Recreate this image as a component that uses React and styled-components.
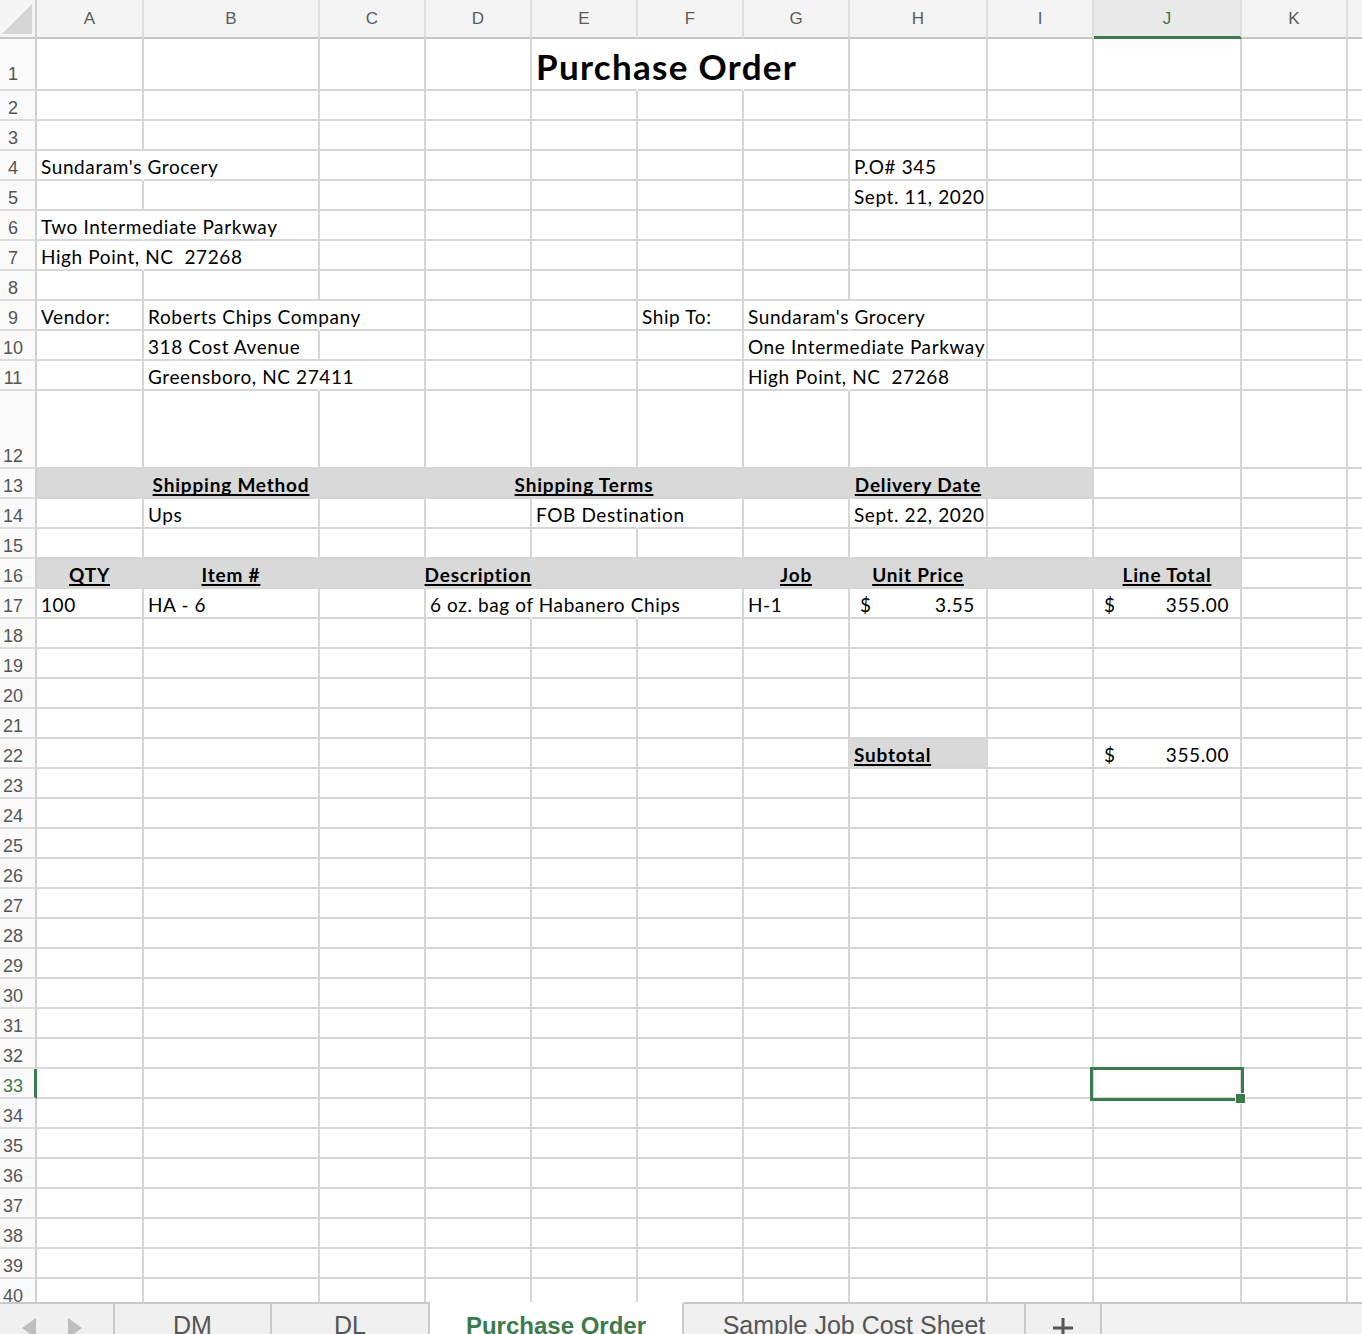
import React from "react";
import styled, { createGlobalStyle } from "styled-components";

const GREEN = "#3b7a4c";
const GRID = "#d6d6d6";
const FILL = "#d9d9d9";

const COLUMNS = ["A", "B", "C", "D", "E", "F", "G", "H", "I", "J", "K", "L"];
const WIDTHS = [107, 176, 106, 106, 106, 106, 106, 138, 106, 148, 106, 106];
const TEMPLATE = `37px ${WIDTHS.map(w => `${w}px`).join(" ")}`;
const HEIGHTS = { 1: 52, 12: 78 };
const ROW_COUNT = 40;

// what each row holds; "overflow" lists cells whose right gridline is hidden by text spilling over
const SHEET = {
  1: { cells: { E: { text: "Purchase Order", kind: "title" } }, overflow: ["E", "F"] },
  4: { cells: { A: { text: "Sundaram's Grocery" }, H: { text: "P.O# 345" } }, overflow: ["A"] },
  5: { cells: { H: { text: "Sept. 11, 2020" } } },
  6: { cells: { A: { text: "Two Intermediate Parkway" } }, overflow: ["A"] },
  7: { cells: { A: { text: "High Point, NC  27268" } }, overflow: ["A"] },
  9: {
    cells: {
      A: { text: "Vendor:" },
      B: { text: "Roberts Chips Company" },
      F: { text: "Ship To:" },
      G: { text: "Sundaram's Grocery" },
    },
    overflow: ["B", "G"],
  },
  10: {
    cells: { B: { text: "318 Cost Avenue" }, G: { text: "One Intermediate Parkway" } },
    overflow: ["G"],
  },
  11: {
    cells: { B: { text: "Greensboro, NC 27411" }, G: { text: "High Point, NC  27268" } },
    overflow: ["B", "G"],
  },
  13: {
    fill: ["A", "I"],
    cells: {
      B: { text: "Shipping Method", kind: "head" },
      E: { text: "Shipping Terms", kind: "head" },
      H: { text: "Delivery Date", kind: "head" },
    },
  },
  14: {
    cells: { B: { text: "Ups" }, E: { text: "FOB Destination" }, H: { text: "Sept. 22, 2020" } },
    overflow: ["E"],
  },
  16: {
    fill: ["A", "J"],
    cells: {
      A: { text: "QTY", kind: "head" },
      B: { text: "Item #", kind: "head" },
      D: { text: "Description", kind: "head" },
      G: { text: "Job", kind: "head" },
      H: { text: "Unit Price", kind: "head" },
      J: { text: "Line Total", kind: "head" },
    },
  },
  17: {
    cells: {
      A: { text: "100" },
      B: { text: "HA - 6" },
      D: { text: "6 oz. bag of Habanero Chips" },
      G: { text: "H-1" },
      H: { text: "3.55", kind: "money" },
      J: { text: "355.00", kind: "money" },
    },
    overflow: ["D", "E"],
  },
  22: {
    fill: ["H", "H"],
    cells: {
      H: { text: "Subtotal", kind: "label" },
      J: { text: "355.00", kind: "money" },
    },
  },
};

const SELECTED = { row: 33, col: "J" };

const TABS = [
  { name: "DM", width: 157 },
  { name: "DL", width: 158 },
  { name: "Purchase Order", width: 254, active: true },
  { name: "Sample Job Cost Sheet", width: 342 },
];

const GlobalStyle = createGlobalStyle`
  html, body {
    margin: 0;
    padding: 0;
    background: #fff;
    overflow: hidden;
  }
  #root {
    width: 1362px;
    height: 1334px;
  }
`;

const Window = styled.div`
  width: 1362px;
  height: 1334px;
  display: flex;
  flex-direction: column;
  overflow: hidden;
  background: #fff;
`;

const Sheet = styled.div`
  flex: 1;
  overflow: hidden;
  display: flex;
  flex-direction: column;
`;

const Row = styled.div`
  display: grid;
  grid-template-columns: ${TEMPLATE};
  height: ${p => p.$height}px;
  flex-shrink: 0;
`;

const Corner = styled.div`
  box-sizing: border-box;
  background: #f4f4f4;
  border-right: 2px solid #d0d0d0;
  border-bottom: 2px solid #c6c6c6;
  display: flex;
  align-items: flex-end;
  justify-content: flex-end;
  padding: 0 3px 3px 0;
`;

const ColHead = styled.div`
  box-sizing: border-box;
  background: ${p => (p.$active ? "#e9e9e9" : "#f4f4f4")};
  border-right: 2px solid #dedede;
  border-bottom: ${p => (p.$active ? `3px solid ${GREEN}` : "2px solid #c6c6c6")};
  display: flex;
  align-items: center;
  justify-content: center;
  padding-top: ${p => (p.$active ? 1 : 0)}px;
  font-family: "Liberation Sans", Arial, sans-serif;
  font-size: 17px;
  color: ${p => (p.$active ? GREEN : "#5b5b5b")};
`;

const RowHead = styled.div`
  box-sizing: border-box;
  background: #fafafa;
  border-right: ${p => (p.$active ? `3px solid ${GREEN}` : "2px solid #d0d0d0")};
  border-bottom: 2px solid #dcdcdc;
  display: flex;
  align-items: flex-end;
  justify-content: center;
  padding: 0 ${p => (p.$active ? 8 : 9)}px ${p => (p.$tall ? 4 : 0)}px 0;
  font-family: "Liberation Sans", Arial, sans-serif;
  font-size: 18px;
  color: ${p => (p.$active ? GREEN : "#555")};
`;

const borderColor = p => {
  if (p.$fill) return p.$fillEnd ? GRID : FILL;
  if (p.$overflow) return "transparent";
  return GRID;
};

const Cell = styled.div`
  box-sizing: border-box;
  position: ${p => (p.$selected ? "relative" : "static")};
  min-width: 0;
  display: flex;
  align-items: flex-end;
  justify-content: ${p => (p.$center ? "center" : "flex-start")};
  padding: 0 4px ${p => (p.$title ? 2 : 0)}px 4px;
  background: ${p => (p.$fill ? FILL : "transparent")};
  border-right: 2px solid ${borderColor};
  border-bottom: 2px solid ${GRID};
  white-space: pre;
  font-family: Lato, "Noto Sans", sans-serif;
  font-size: 19px;
  letter-spacing: 0.6px;
  color: #000;
`;

const Value = styled.span`
  position: relative;
  line-height: 1.2;
`;

const Title = styled.span`
  position: relative;
  font-size: 35px;
  font-weight: 700;
  letter-spacing: 1.3px;
  line-height: 1.2;
`;

const Heading = styled.span`
  position: relative;
  font-weight: 700;
  letter-spacing: 0.8px;
  line-height: 1.2;
  text-decoration: underline;
  text-decoration-thickness: 2px;
  text-underline-offset: 2px;
  text-decoration-skip-ink: none;
`;

const Money = styled.span`
  position: relative;
  flex: 1;
  display: flex;
  justify-content: space-between;
  line-height: 1.2;
  padding: 0 7px 0 6px;
`;

const Selection = styled.div`
  position: absolute;
  left: -4px;
  top: -2px;
  width: 154px;
  height: 34px;
  box-sizing: border-box;
  border: 3px solid ${GREEN};
  pointer-events: none;
`;

const FillHandle = styled.div`
  position: absolute;
  right: -5px;
  bottom: -6px;
  width: 11px;
  height: 11px;
  box-sizing: border-box;
  background: ${GREEN};
  border: 1px solid #fff;
`;

const TabBar = styled.div`
  height: 32px;
  flex-shrink: 0;
  display: flex;
  background: #f0f0f0;
`;

const TabNav = styled.div`
  box-sizing: border-box;
  width: 115px;
  border-top: 2px solid #c9c9c9;
  border-right: 2px solid #c9c9c9;
  display: flex;
  align-items: flex-start;
  gap: 32px;
  padding: 14px 0 0 22px;
  overflow: hidden;
`;

const Tab = styled.div`
  box-sizing: border-box;
  width: ${p => p.$width}px;
  border-top: 2px solid ${p => (p.$active ? "#fff" : "#c9c9c9")};
  border-right: 2px solid #c9c9c9;
  background: ${p => (p.$active ? "#fff" : "#f0f0f0")};
  display: flex;
  justify-content: center;
  align-items: flex-start;
  padding-top: ${p => (p.$active ? 10 : 9)}px;
  overflow: hidden;
  white-space: nowrap;
  font-family: "Liberation Sans", Arial, sans-serif;
  font-size: ${p => (p.$active ? 24 : 25)}px;
  font-weight: ${p => (p.$active ? 700 : 400)};
  line-height: 1;
  color: ${p => (p.$active ? GREEN : "#555")};
`;

const TabFiller = styled.div`
  flex: 1;
  border-top: 2px solid #c9c9c9;
  background: #f2f2f2;
`;

const Arrow = ({ dir }) => (
  <svg width="14" height="20" viewBox="0 0 14 20">
    <polygon
      points={dir === "left" ? "14,0 0,10 14,20" : "0,0 14,10 0,20"}
      fill="#bdbdbd"
    />
  </svg>
);

const Plus = () => (
  <svg width="22" height="22" viewBox="0 0 22 22" style={{ marginTop: 4 }}>
    <path d="M11 1v20M1 11h20" stroke="#555" strokeWidth="3" />
  </svg>
);

function CellContent({ data }) {
  if (!data) return null;
  if (data.kind === "title") return <Title>{data.text}</Title>;
  if (data.kind === "head" || data.kind === "label") return <Heading>{data.text}</Heading>;
  if (data.kind === "money")
    return (
      <Money>
        <span>$</span>
        <span>{data.text}</span>
      </Money>
    );
  return <Value>{data.text}</Value>;
}

function SheetRow({ n }) {
  const spec = SHEET[n] || {};
  const fill = spec.fill ? spec.fill.map(c => COLUMNS.indexOf(c)) : null;
  const overflow = spec.overflow || [];
  return (
    <Row $height={HEIGHTS[n] || 30}>
      <RowHead $active={n === SELECTED.row} $tall={n === 1}>
        {n}
      </RowHead>
      {COLUMNS.map((col, i) => {
        const data = spec.cells ? spec.cells[col] : null;
        const filled = fill && i >= fill[0] && i <= fill[1];
        const selected = n === SELECTED.row && col === SELECTED.col;
        return (
          <Cell
            key={col}
            $fill={filled}
            $fillEnd={filled && i === fill[1]}
            $overflow={overflow.includes(col)}
            $center={data && data.kind === "head"}
            $title={data && data.kind === "title"}
            $selected={selected}
          >
            <CellContent data={data} />
            {selected && (
              <Selection>
                <FillHandle />
              </Selection>
            )}
          </Cell>
        );
      })}
    </Row>
  );
}

export default function App() {
  const rows = Array.from({ length: ROW_COUNT }, (_, i) => i + 1);
  return (
    <>
      <GlobalStyle />
      <Window>
        <Sheet>
          <Row $height={39}>
            <Corner>
              <svg width="30" height="30" viewBox="0 0 30 30">
                <polygon points="0,30 30,30 30,0" fill="#d6d6d6" />
              </svg>
            </Corner>
            {COLUMNS.map(col => (
              <ColHead key={col} $active={col === SELECTED.col}>
                {col}
              </ColHead>
            ))}
          </Row>
          {rows.map(n => (
            <SheetRow key={n} n={n} />
          ))}
        </Sheet>
        <TabBar>
          <TabNav>
            <Arrow dir="left" />
            <Arrow dir="right" />
          </TabNav>
          {TABS.map(tab => (
            <Tab key={tab.name} $width={tab.width} $active={tab.active}>
              {tab.name}
            </Tab>
          ))}
          <Tab $width={76}>
            <Plus />
          </Tab>
          <TabFiller />
        </TabBar>
      </Window>
    </>
  );
}
